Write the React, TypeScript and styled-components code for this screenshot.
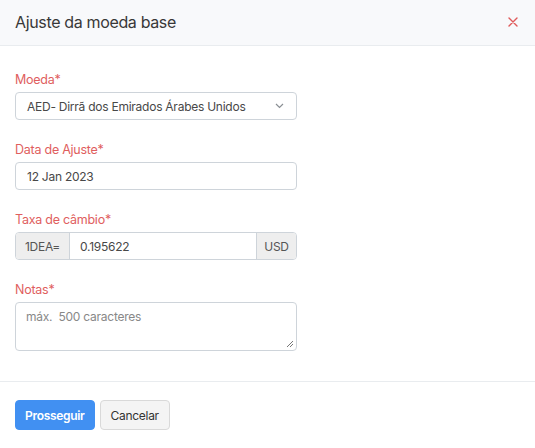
import React from 'react';
import styled, {createGlobalStyle} from 'styled-components';

const Global = createGlobalStyle`
  html, body {
    margin: 0;
    padding: 0;
    background: #fff;
  }
  body {
    font-family: Inter, "Noto Sans", sans-serif;
    font-size: 12px;
    letter-spacing: -0.25px;
    color: #484848;
  }
  * { box-sizing: border-box; }
`

const Modal = styled.div`
  width: 535px;
  height: 448px;
  display: flex;
  flex-direction: column;
  background: #fff;
`
const Header = styled.div`
  height: 46px;
  display: flex;
  align-items: center;
  justify-content: space-between;
  padding: 0 15px 2px 15px;
  background: #f8f9fb;
  border-bottom: 1px solid #e9ecef;
`
const Title = styled.h5`
  margin: 0;
  font-size: 16px;
  font-weight: 400;
  letter-spacing: -0.35px;
  color: #383838;
`
const Close = styled.button`
  border: none;
  background: none;
  padding: 0;
  width: 14px;
  height: 14px;
  display: flex;
  align-items: center;
  justify-content: center;
  cursor: pointer;
`
const Body = styled.form`
  padding: 25px 15px 9px;
  flex: 1;
`
const Group = styled.div`
  margin-bottom: 21px;
  width: 282px;
`
const Label = styled.label`
  display: block;
  line-height: 18px;
  margin-bottom: 3px;
  color: #e05e5e;
  font-size: 12.5px;
`
const Field = styled.div`
  height: 28px;
  border: 1px solid #ced4da;
  border-radius: 4px;
  display: flex;
  align-items: center;
  padding: 0 12px 0 11px;
  justify-content: space-between;
  background: #fff;
`
const InputGroup = styled.div`
  height: 28px;
  display: flex;
  border: 1px solid #ced4da;
  border-radius: 4px;
  overflow: hidden;
`
const Addon = styled.span<{$side: 'left' | 'right'}>`
  display: flex;
  align-items: center;
  justify-content: center;
  background: #eeeeee;
  color: #555;
  ${p => (p.$side === 'left' ? 'border-right' : 'border-left')}: 1px solid #ced4da;
  width: ${p => (p.$side === 'left' ? '54px' : '40px')};
`
const GroupInput = styled.span`
  flex: 1;
  display: flex;
  align-items: center;
  padding: 0 10px;
`
const TextArea = styled.div`
  height: 49px;
  border: 1px solid #ced4da;
  border-radius: 4px;
  padding: 6px 10px;
  color: #888;
  position: relative;
`
const Grip = styled.svg`
  position: absolute;
  right: 2px;
  bottom: 2px;
`
const Footer = styled.div`
  border-top: 1px solid #e9ecef;
  padding: 18px 15px;
  display: flex;
  gap: 5px;
`
const Button = styled.button<{$primary?: boolean}>`
  height: 30px;
  padding: 0 ${p => (p.$primary ? '9px' : '10px')};
  border-radius: 4px;
  font-family: Inter, "Noto Sans", sans-serif;
  font-size: 12px;
  letter-spacing: -0.3px;
  font-weight: ${p => (p.$primary ? 600 : 400)};
  color: ${p => (p.$primary ? '#fff' : '#333')};
  background: ${p => (p.$primary ? '#4190f2' : '#f4f4f4')};
  border: 1px solid ${p => (p.$primary ? '#4190f2' : '#d9d9d9')};
`

export default function App() {
  return (
    <>
      <Global/>
      <Modal>
        <Header>
          <Title>Ajuste da moeda base</Title>
          <Close aria-label="Fechar">
            <svg width="10" height="10" viewBox="0 0 10 10">
              <path d="M1 1 L9 9 M9 1 L1 9" stroke="#e05a5a" strokeWidth="1.4" strokeLinecap="round"/>
            </svg>
          </Close>
        </Header>
        <Body>
          <Group>
            <Label>Moeda*</Label>
            <Field>
              <span>AED- Dirrã dos Emirados Árabes Unidos</span>
              <svg width="9" height="6" viewBox="0 0 9 6">
                <path d="M1 1 L4.5 4.5 L8 1" fill="none" stroke="#8a8f94" strokeWidth="1.2"/>
              </svg>
            </Field>
          </Group>
          <Group>
            <Label>Data de Ajuste*</Label>
            <Field>
              <span>12 Jan 2023</span>
            </Field>
          </Group>
          <Group>
            <Label>Taxa de câmbio*</Label>
            <InputGroup>
              <Addon $side="left">1DEA=</Addon>
              <GroupInput>0.195622</GroupInput>
              <Addon $side="right">USD</Addon>
            </InputGroup>
          </Group>
          <Group>
            <Label>Notas*</Label>
            <TextArea>
              máx.&nbsp; 500 caracteres
              <Grip width="9" height="9" viewBox="0 0 9 9">
                <path d="M8 2 L2 8 M8 5 L5 8" stroke="#777" strokeWidth="1"/>
              </Grip>
            </TextArea>
          </Group>
        </Body>
        <Footer>
          <Button $primary type="button">Prosseguir</Button>
          <Button type="button">Cancelar</Button>
        </Footer>
      </Modal>
    </>
  );
}
